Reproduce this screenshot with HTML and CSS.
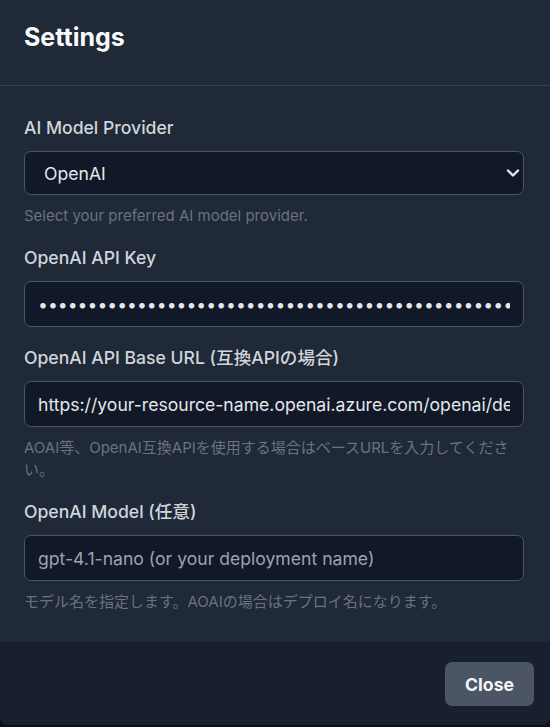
FILE: index.html
```html
<!DOCTYPE html>
<html lang="ja">
<head>
<meta charset="utf-8">
<title>Settings</title>
<link rel="stylesheet" href="styles.css">
</head>
<body>
<div class="modal">
  <header class="modal-header">
    <h2 class="title">Settings</h2>
  </header>
  <div class="modal-body">
    <div class="field">
      <label class="label" for="provider">AI Model Provider</label>
      <div class="select-wrap">
        <select id="provider" class="control select">
          <option>OpenAI</option>
        </select>
        <svg class="chevron" width="14" height="10" viewBox="0 0 14 10"><path d="M2 2.5 L7 7.5 L12 2.5" fill="none" stroke="#e5e7eb" stroke-width="2.4" stroke-linecap="round" stroke-linejoin="round"/></svg>
      </div>
      <p class="help">Select your preferred AI model provider.</p>
    </div>
    <div class="field">
      <label class="label" for="key">OpenAI API Key</label>
      <input id="key" class="control" type="password" value="sk-xxxxxxxxxxxxxxxxxxxxxxxxxxxxxxxxxxxxxxxxxxxxxxxxxxxxxxxxxxxxxx">
    </div>
    <div class="field">
      <label class="label" for="base">OpenAI API Base URL (互換APIの場合)</label>
      <input id="base" class="control" type="text" value="https://your-resource-name.openai.azure.com/openai/deployments/">
      <p class="help">AOAI等、OpenAI互換APIを使用する場合はベースURLを入力してください。</p>
    </div>
    <div class="field">
      <label class="label" for="model">OpenAI Model (任意)</label>
      <input id="model" class="control" type="text" placeholder="gpt-4.1-nano (or your deployment name)">
      <p class="help">モデル名を指定します。AOAIの場合はデプロイ名になります。</p>
    </div>
  </div>
  <footer class="modal-footer">
    <button class="btn" type="button">Close</button>
  </footer>
</div>
</body>
</html>
```
FILE: styles.css
```css
* { box-sizing: border-box; }
html, body {
  margin: 0;
  padding: 0;
  background: #0b0f17;
}
body {
  font-family: Inter, "Noto Sans CJK JP", "Noto Sans", sans-serif;
  color: #d1d5db;
  width: 550px;
  height: 727px;
  overflow: hidden;
}
.modal {
  width: 550px;
  height: 725px;
  background: #1f2937;
  border-radius: 0 0 8px 8px;
  display: flex;
  flex-direction: column;
  overflow: hidden;
}
.modal-header {
  padding: 20px 24px 30px;
  border-bottom: 1px solid #374151;
}
.title {
  margin: 0;
  font-size: 25px;
  line-height: 35px;
  font-weight: 700;
  color: #f9fafb;
}
.modal-body {
  padding: 29px 26px 29px 24px;
  display: flex;
  flex-direction: column;
  gap: 18px;
}
.field {
  display: flex;
  flex-direction: column;
}
.label {
  font-size: 17.6px;
  line-height: 26px;
  font-weight: 500;
  color: #d1d5db;
  margin-bottom: 10px;
}
.control {
  width: 100%;
  height: 46px;
  background: #111827;
  border: 1px solid #4b5563;
  border-radius: 7px;
  color: #e5e7eb;
  font-family: Inter, "Noto Sans CJK JP", sans-serif;
  font-size: 17.6px;
  padding: 0 13px;
  outline: none;
}
.control::placeholder { color: #9ca3af; }
.select-wrap {
  position: relative;
}
.select {
  height: 44px;
  appearance: none;
  -webkit-appearance: none;
  padding: 0 40px 0 19px;
}
.chevron {
  position: absolute;
  right: 4px;
  top: 17px;
  pointer-events: none;
}
.help {
  margin: 10px 0 0;
  font-size: 15px;
  line-height: 22px;
  color: #6b7280;
}
.modal-footer {
  flex: 1;
  background: #18202f;
  display: flex;
  justify-content: flex-end;
  align-items: flex-start;
  padding: 20px 16px;
}
.btn {
  height: 44px;
  padding: 0 20px;
  background: #4b5563;
  color: #f3f4f6;
  border: none;
  border-radius: 7px;
  font-family: Inter, sans-serif;
  font-size: 17.6px;
  font-weight: 700;
}
```
